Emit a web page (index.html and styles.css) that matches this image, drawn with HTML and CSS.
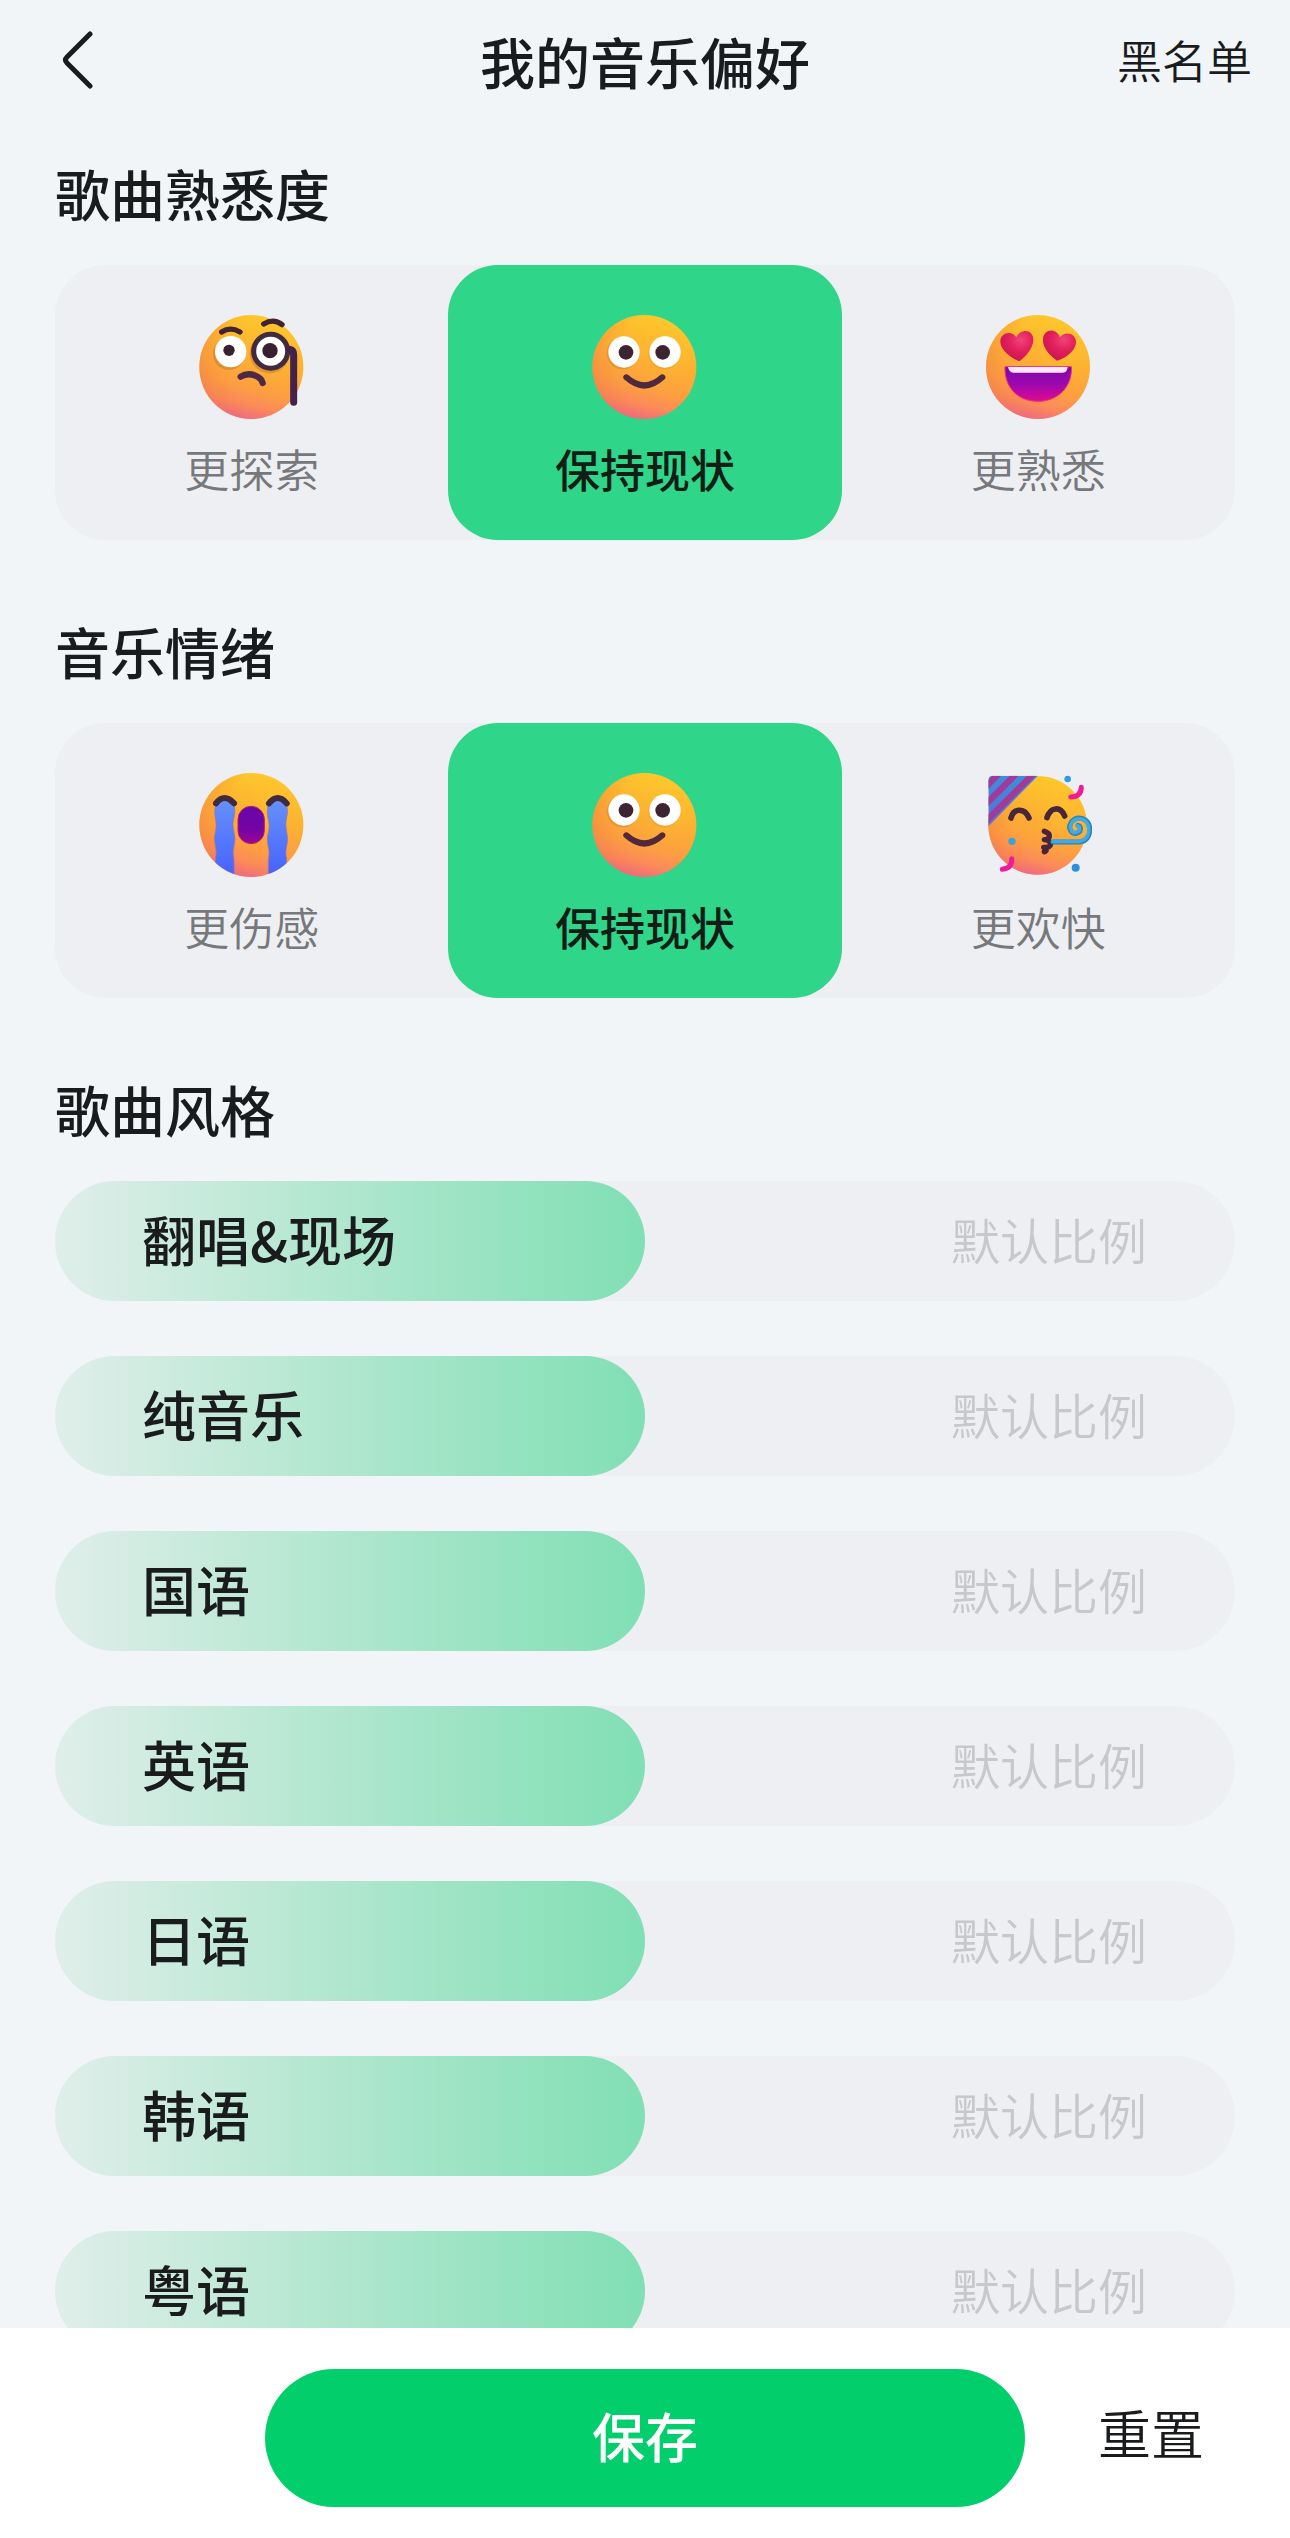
FILE: index.html
```html
<!DOCTYPE html>
<html lang="zh-CN">
<head>
<meta charset="utf-8">
<meta name="viewport" content="width=device-width, initial-scale=1">
<title>我的音乐偏好</title>
<link rel="stylesheet" href="styles.css">
</head>
<body>
<svg class="defs" width="0" height="0" aria-hidden="true">
  <defs>
    <linearGradient id="skin" x1="0.65" y1="0" x2="0.4" y2="1">
      <stop offset="0" stop-color="#fecf2a"/>
      <stop offset="0.4" stop-color="#fdb431"/>
      <stop offset="0.7" stop-color="#fda042"/>
      <stop offset="0.86" stop-color="#fc8a60"/>
      <stop offset="1" stop-color="#ee629c"/>
    </linearGradient>
    <radialGradient id="shade" cx="0.72" cy="0.4" r="0.75">
      <stop offset="0" stop-color="#ffc62d" stop-opacity="0.25"/>
      <stop offset="0.6" stop-color="#f78a35" stop-opacity="0.08"/>
      <stop offset="1" stop-color="#ee7448" stop-opacity="0.45"/>
    </radialGradient>
    <linearGradient id="mouth" x1="0" y1="0" x2="0" y2="1">
      <stop offset="0" stop-color="#7e08a8"/>
      <stop offset="0.5" stop-color="#9c08b0"/>
      <stop offset="1" stop-color="#e00a90"/>
    </linearGradient>
    <linearGradient id="cry-mouth" x1="0" y1="0" x2="0" y2="1">
      <stop offset="0" stop-color="#6a05a8"/>
      <stop offset="0.6" stop-color="#7205a6"/>
      <stop offset="1" stop-color="#a00592"/>
    </linearGradient>
    <linearGradient id="tear" x1="0" y1="0" x2="0" y2="1">
      <stop offset="0" stop-color="#6590fb"/>
      <stop offset="1" stop-color="#4660fd"/>
    </linearGradient>
    <radialGradient id="love" cx="0.62" cy="0.3" r="0.75">
      <stop offset="0" stop-color="#f0457c"/>
      <stop offset="0.45" stop-color="#e3215f"/>
      <stop offset="1" stop-color="#c9134c"/>
    </radialGradient>
    <linearGradient id="hat" x1="0" y1="0" x2="0" y2="1">
      <stop offset="0" stop-color="#3c8fdc"/>
      <stop offset="1" stop-color="#5a6fd0"/>
    </linearGradient>
    <clipPath id="cry-clip"><circle cx="213" cy="208" r="156"/></clipPath>
    <clipPath id="hat-clip"><path d="M84 60H219L70 212V74Q70 60 84 60Z"/></clipPath>
    <g id="smile">
      <circle cx="223" cy="215" r="156" fill="url(#skin)"/>
      <circle cx="223" cy="215" r="156" fill="url(#shade)"/>
      <circle cx="158" cy="174" r="48" fill="#cc7a28" opacity="0.4"/>
      <circle cx="282" cy="174" r="48" fill="#e89428" opacity="0.4"/>
      <circle cx="162" cy="170" r="47" fill="#fff"/>
      <circle cx="285" cy="170" r="47" fill="#fff"/>
      <circle cx="168" cy="171" r="22" fill="#3d2432"/>
      <circle cx="278" cy="171" r="22" fill="#3d2432"/>
      <path d="M169 246Q223 295 277 246" fill="none" stroke="#50293d" stroke-width="18" stroke-linecap="round"/>
    </g>
  </defs>
</svg>

<div class="page">
  <header class="topbar">
    <button class="back" type="button" aria-label="返回">
      <svg class="chevron" viewBox="0 0 34 58" aria-hidden="true"><path d="M29 3L6 26Q3 29 6 32L29 55"/></svg>
    </button>
    <h1 class="title">我的音乐偏好</h1>
    <a class="blacklist" href="#blacklist">黑名单</a>
  </header>

  <main class="content">
    <section class="section">
      <h2 class="heading">歌曲熟悉度</h2>
      <div class="choices" role="radiogroup" aria-label="歌曲熟悉度">
        <label class="choice">
          <input class="choice-input" type="radio" name="familiarity">
          <svg class="emoji" viewBox="53 53 324 324" aria-hidden="true">
            <circle cx="213" cy="215" r="156" fill="url(#skin)"/>
            <circle cx="213" cy="215" r="156" fill="url(#shade)"/>
            <circle cx="146" cy="176" r="48" fill="#bd7428" opacity="0.45"/>
            <circle cx="268" cy="174" r="60" fill="#bd7428" opacity="0.45"/>
            <circle cx="151" cy="169" r="47" fill="#fff"/>
            <circle cx="146" cy="165" r="17" fill="#37212e"/>
            <circle cx="271" cy="168" r="51" fill="#fff" stroke="#422b40" stroke-width="15"/>
            <circle cx="269" cy="166" r="23" fill="#37212e"/>
            <path d="M327 162Q340 164 340 178V321" fill="none" stroke="#43234a" stroke-width="21" stroke-linecap="round"/>
            <path d="M124 110Q150 93 179 110M250 86Q280 68 305 88" fill="none" stroke="#40242f" stroke-width="16" stroke-linecap="round"/>
            <path d="M181 244Q202 231 225 241Q243 248 247 263" fill="none" stroke="#4e2846" stroke-width="19" stroke-linecap="round"/>
          </svg>
          <span class="choice-text">更探索</span>
        </label>
        <label class="choice">
          <input class="choice-input" type="radio" name="familiarity" checked>
          <svg class="emoji" viewBox="63 53 324 324" aria-hidden="true"><use href="#smile"/></svg>
          <span class="choice-text">保持现状</span>
        </label>
        <label class="choice">
          <input class="choice-input" type="radio" name="familiarity">
          <svg class="emoji" viewBox="57 53 324 324" aria-hidden="true">
            <circle cx="219" cy="215" r="156" fill="url(#skin)"/>
            <circle cx="219" cy="215" r="156" fill="url(#shade)"/>
            <path d="M163 198C145 191 106 167 106 139C106 110 142 105 154 126C165 99 206 99 205 135C204 160 181 185 163 198Z" fill="url(#love)"/>
            <path d="M276 196C256 183 232 157 234 132C236 99 275 97 285 126C297 106 334 112 333 142C331 169 296 191 276 196Z" fill="url(#love)"/>
            <path d="M120 214H319C323 270 283 318 218 318C153 318 117 270 120 214Z" fill="url(#mouth)" stroke="#ef2f79" stroke-width="3"/>
            <path d="M129 215H308Q307 232 293 232H145Q132 231 129 215Z" fill="#fde7f8"/>
          </svg>
          <span class="choice-text">更熟悉</span>
        </label>
      </div>
    </section>

    <section class="section">
      <h2 class="heading">音乐情绪</h2>
      <div class="choices" role="radiogroup" aria-label="音乐情绪">
        <label class="choice">
          <input class="choice-input" type="radio" name="mood">
          <svg class="emoji" viewBox="53 46 324 324" aria-hidden="true">
            <circle cx="213" cy="208" r="156" fill="url(#skin)"/>
            <circle cx="213" cy="208" r="156" fill="url(#shade)"/>
            <g clip-path="url(#cry-clip)" fill="url(#tear)" stroke="#a873a8" stroke-width="2">
              <path d="M106 146Q134 122 161 146Q167 166 161 186Q155 206 161 228Q167 250 161 272Q156 290 161 312L162 370H105V312Q110 290 105 270Q99 250 105 230Q110 208 105 188Q100 168 106 146Z"/>
              <path d="M264 146Q292 122 318 146Q325 166 319 186Q314 206 319 228Q325 250 319 272Q314 290 319 312V370H264V312Q269 290 263 270Q258 250 264 230Q269 208 263 188Q258 168 264 146Z"/>
            </g>
            <rect x="173" y="152" width="79" height="112" rx="39" fill="url(#cry-mouth)" stroke="#b32070" stroke-width="3"/>
            <path d="M107 143Q132 111 161 143M266 143Q292 111 319 143" fill="none" stroke="#402a40" stroke-width="18" stroke-linecap="round"/>
          </svg>
          <span class="choice-text">更伤感</span>
        </label>
        <label class="choice">
          <input class="choice-input" type="radio" name="mood" checked>
          <svg class="emoji" viewBox="63 53 324 324" aria-hidden="true"><use href="#smile"/></svg>
          <span class="choice-text">保持现状</span>
        </label>
        <label class="choice">
          <input class="choice-input" type="radio" name="mood">
          <svg class="emoji" viewBox="57 46 324 324" aria-hidden="true">
            <circle cx="218" cy="209" r="148" fill="url(#skin)"/>
            <circle cx="218" cy="209" r="148" fill="url(#shade)"/>
            <g clip-path="url(#hat-clip)">
              <path d="M60 50H230V220H60Z" fill="url(#hat)"/>
              <path d="M60 96L116 40M60 148L168 40M60 200L222 38" stroke="#a13a9b" stroke-width="19" fill="none"/>
            </g>
            <path d="M138 187C146 156 179 156 192 187M246 186C256 154 286 150 299 181" fill="none" stroke="#482738" stroke-width="17" stroke-linecap="round"/>
            <path d="M238 227Q255 232 253 243Q251 252 238 252Q257 255 257 266Q254 277 236 275Q250 284 238 288" fill="none" stroke="#49243a" stroke-width="16" stroke-linecap="round" stroke-linejoin="round"/>
            <path d="M264 259H342C366 257 376 239 374 216C371 188 337 177 320 198C306 217 319 236 334 233C350 229 349 211 339 209" fill="none" stroke="#2784bd" stroke-width="15" stroke-linecap="round"/>
            <path d="M264 257H342C363 255 373 238 371 216C368 190 337 181 322 199C309 217 321 233 334 230C347 226 346 212 338 210" fill="none" stroke="#43a9df" stroke-width="11" stroke-linecap="round"/>
            <circle cx="308" cy="70" r="10" fill="#339be0"/>
            <circle cx="141" cy="257" r="11" fill="#3ca2dc"/>
            <circle cx="332" cy="336" r="12" fill="#2a91e0"/>
            <path d="M349 95Q348 123 317 124M140 309Q142 337 112 341" fill="none" stroke="#ee1b97" stroke-width="15" stroke-linecap="round"/>
          </svg>
          <span class="choice-text">更欢快</span>
        </label>
      </div>
    </section>

    <section class="section">
      <h2 class="heading">歌曲风格</h2>
      <div class="styles">
        <label class="style"><span class="fill" style="width:50%"></span><span class="style-name">翻唱&amp;现场</span><output class="ratio">默认比例</output><input class="slider" type="range" value="50"></label>
        <label class="style"><span class="fill" style="width:50%"></span><span class="style-name">纯音乐</span><output class="ratio">默认比例</output><input class="slider" type="range" value="50"></label>
        <label class="style"><span class="fill" style="width:50%"></span><span class="style-name">国语</span><output class="ratio">默认比例</output><input class="slider" type="range" value="50"></label>
        <label class="style"><span class="fill" style="width:50%"></span><span class="style-name">英语</span><output class="ratio">默认比例</output><input class="slider" type="range" value="50"></label>
        <label class="style"><span class="fill" style="width:50%"></span><span class="style-name">日语</span><output class="ratio">默认比例</output><input class="slider" type="range" value="50"></label>
        <label class="style"><span class="fill" style="width:50%"></span><span class="style-name">韩语</span><output class="ratio">默认比例</output><input class="slider" type="range" value="50"></label>
        <label class="style"><span class="fill" style="width:50%"></span><span class="style-name">粤语</span><output class="ratio">默认比例</output><input class="slider" type="range" value="50"></label>
      </div>
    </section>
  </main>

  <footer class="actions">
    <button class="save" type="button">保存</button>
    <button class="reset" type="button">重置</button>
  </footer>
</div>
</body>
</html>
```

FILE: styles.css
```css
* {
  box-sizing: border-box;
}

body {
  margin: 0;
  background: #f1f5f8;
  color: #191b1c;
  font-family: "Noto Sans CJK SC", sans-serif;
}

button {
  padding: 0;
  border: 0;
  background: none;
  color: inherit;
  font: inherit;
  cursor: pointer;
}

.defs {
  position: absolute;
}

.page {
  display: flex;
  flex-direction: column;
  height: 100vh;
}

/* Top bar */
.topbar {
  display: grid;
  grid-template-columns: 1fr auto 1fr;
  align-items: center;
  flex: none;
  height: 120px;
  padding: 0 38px;
}

.back {
  display: flex;
  justify-self: start;
  padding: 0 23px;
}

.chevron {
  width: 34px;
  height: 58px;
  fill: none;
  stroke: #191b1c;
  stroke-width: 5;
  stroke-linecap: round;
}

.title,
.heading {
  margin: 0;
  font-size: 55px;
  font-weight: 500;
  line-height: 80px;
}

.blacklist {
  justify-self: end;
  color: inherit;
  font-size: 45px;
  font-weight: 350;
  line-height: 60px;
  text-decoration: none;
}

/* Sections */
.content {
  flex: 1;
  min-height: 0;
  padding: 32px 55px 0;
  overflow-y: auto;
  scrollbar-width: none;
}

.section {
  margin-bottom: 70px;
}

.heading {
  margin-bottom: 33px;
}

.choices {
  display: grid;
  grid-template-columns: repeat(3, 1fr);
  border-radius: 50px;
  background: #eeeff3;
}

.choice {
  position: relative;
  display: flex;
  flex-direction: column;
  align-items: center;
  gap: 18px;
  padding: 48px 0 41px;
  border-radius: 50px;
  color: #77787b;
  font-size: 45px;
  font-weight: 350;
  line-height: 60px;
}

.choice:has(:checked) {
  background: #2fd588;
  color: #121d16;
  font-weight: 500;
}

.choice-input,
.slider {
  position: absolute;
  inset: 0;
  width: 100%;
  height: 100%;
  margin: 0;
  opacity: 0;
  cursor: pointer;
}

.emoji {
  width: 108px;
  height: 108px;
}

/* Style sliders */
.styles {
  display: grid;
  gap: 55px;
}

.style {
  position: relative;
  display: flex;
  align-items: center;
  justify-content: space-between;
  height: 120px;
  padding: 0 88px 6px 87px;
  border-radius: 60px;
  background: #eeeff3;
}

.fill {
  position: absolute;
  inset: 0 auto 0 0;
  border-radius: 60px;
  background: linear-gradient(90deg, #e0eeea, #b3e7d0 45%, #80dfb4);
}

.style-name {
  position: relative;
  font-size: 54px;
  font-weight: 500;
}

.ratio {
  color: #c7c8cc;
  font-size: 49px;
  font-weight: 350;
}

/* Bottom actions */
.actions {
  display: grid;
  grid-template-columns: 1fr 760px 1fr;
  align-items: center;
  flex: none;
  height: 210px;
  padding-top: 10px;
  background: #fff;
}

.save {
  grid-column: 2;
  height: 138px;
  padding-bottom: 6px;
  border-radius: 69px;
  background: #02cf6c;
  color: #fff;
  font-size: 53px;
  font-weight: 500;
}

.reset {
  justify-self: start;
  margin-left: 73px;
  padding-bottom: 12px;
  font-size: 53px;
  font-weight: 350;
}
```
